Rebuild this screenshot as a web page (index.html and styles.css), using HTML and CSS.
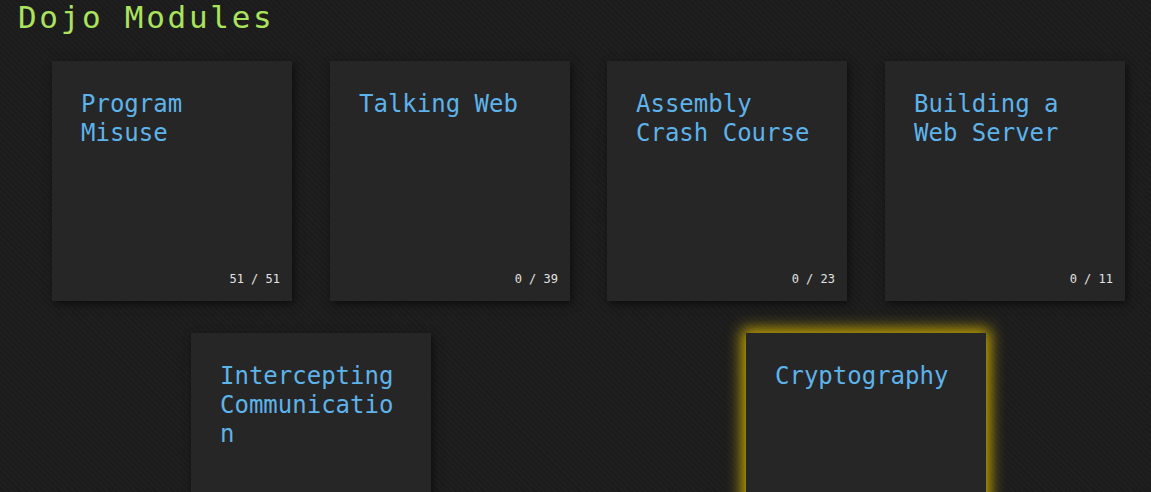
FILE: index.html
```html
<!DOCTYPE html>
<html>
<head>
<meta charset="utf-8">
<title>Dojo Modules</title>
<link rel="stylesheet" href="styles.css">
</head>
<body>
<h1 class="page-title">Dojo Modules</h1>
<div class="modules">
  <div class="row row-top">
    <a class="card"><h2 class="card-title">Program Misuse</h2><span class="count">51 / 51</span></a>
    <a class="card"><h2 class="card-title">Talking Web</h2><span class="count">0 / 39</span></a>
    <a class="card"><h2 class="card-title">Assembly Crash Course</h2><span class="count">0 / 23</span></a>
    <a class="card"><h2 class="card-title">Building a Web Server</h2><span class="count">0 / 11</span></a>
  </div>
  <div class="row row-bottom">
    <a class="card"><h2 class="card-title">Intercepting Communication</h2></a>
    <a class="card card-active"><h2 class="card-title">Cryptography</h2></a>
  </div>
</div>
</body>
</html>
```
FILE: styles.css
```css
html, body {
  margin: 0;
  padding: 0;
  height: 100%;
}
body {
  background-color: #1c1c1c;
  background-image:
    repeating-linear-gradient(45deg, rgba(255,255,255,0.01) 0 2px, rgba(0,0,0,0.02) 2px 4px);
  font-family: "DejaVu Sans Mono", "Liberation Mono", monospace;
  overflow: hidden;
}
.page-title {
  margin: 0;
  padding: 0 0 0 18px;
  font-size: 31px;
  font-weight: normal;
  letter-spacing: 2.7px;
  line-height: 35px;
  color: #acE35c;
}
.modules {
  padding-top: 26px;
}
.row {
  display: flex;
}
.row-top {
  padding-left: 52px;
  gap: 38px;
}
.row-top .card:nth-child(3) { margin-left: -1px; }
.row-bottom {
  padding-left: 191px;
  gap: 315px;
  margin-top: 32px;
}
.card {
  position: relative;
  box-sizing: border-box;
  width: 240px;
  height: 240px;
  flex: none;
  padding: 29px 29px;
  background: #262626;
  box-shadow: 2px 3px 8px rgba(0,0,0,0.55);
}
.card-title {
  margin: 0;
  font-size: 24px;
  font-weight: normal;
  line-height: 29px;
  color: #5db3ea;
  overflow-wrap: anywhere;
}
.count {
  position: absolute;
  right: 12px;
  bottom: 15px;
  font-size: 12px;
  line-height: 14px;
  color: #e2e2e2;
}
.card-active {
  box-shadow: 0 0 14px 4px rgba(220,185,0,0.9);
}
```
